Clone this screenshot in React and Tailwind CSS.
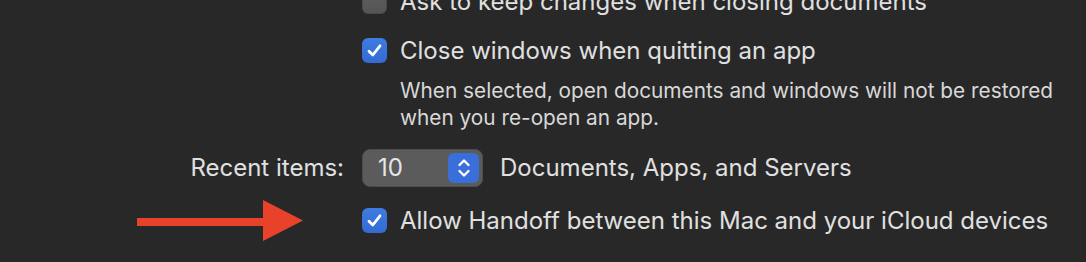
import React from 'react';

function Checkbox({ checked }) {
  if (!checked) {
    return (
      <div className="w-[25px] h-[25px] shrink-0 rounded-[6px] bg-gradient-to-b from-[#5e5e5e] to-[#555555] border border-[#4a4a4a]" />
    );
  }
  return (
    <div className="w-[25px] h-[25px] shrink-0 rounded-[6px] bg-gradient-to-b from-[#3f7be0] to-[#336bd3] flex items-center justify-center">
      <svg width="17" height="17" viewBox="0 0 17 17" fill="none">
        <path d="M3 9.2 L6.8 13 L14 3.8" stroke="white" strokeWidth="2.8" strokeLinecap="round" strokeLinejoin="round" />
      </svg>
    </div>
  );
}

function Stepper({ value }) {
  return (
    <div className="w-[121px] h-[38px] rounded-[8px] bg-[#5b5b5b] border border-[#4d4d4d] flex items-center justify-between pl-[15px] pr-[3px]">
      <span className="text-[24px] text-[#e6e6e6] leading-none">{value}</span>
      <div className="w-[31px] h-[30px] rounded-[6px] bg-[#3a6ed8] flex items-center justify-center">
        <svg width="14" height="22" viewBox="0 0 14 22" fill="none">
          <path d="M2.5 8 L7 3.5 L11.5 8" stroke="white" strokeWidth="2.4" strokeLinecap="round" strokeLinejoin="round" />
          <path d="M2.5 14 L7 18.5 L11.5 14" stroke="white" strokeWidth="2.4" strokeLinecap="round" strokeLinejoin="round" />
        </svg>
      </div>
    </div>
  );
}

function Arrow() {
  return (
    <svg width="166" height="41" viewBox="0 0 166 41">
      <rect x="0" y="18" width="128" height="8" fill="#e8432a" />
      <polygon points="126,0 166,20.5 126,41" fill="#e8432a" />
    </svg>
  );
}

export default function App() {
  return (
    <div className="w-[1086px] h-[262px] overflow-hidden bg-[#282828] text-[#e0e0e0] font-['Inter','Noto_Sans',sans-serif]">
      {/* Ask to keep changes (scrolled, clipped at top) */}
      <div className="mt-[-11px] h-[25px] pl-[362px] flex items-center gap-[13px]">
        <Checkbox checked={false} />
        <span className="text-[24px] leading-none">Ask to keep changes when closing documents</span>
      </div>

      {/* Close windows */}
      <div className="mt-[24px] h-[25px] pl-[362px] flex items-center gap-[13px]">
        <Checkbox checked />
        <span className="text-[24px] leading-none">Close windows when quitting an app</span>
      </div>

      <p className="mt-[14px] pl-[400px] pr-[20px] text-[20.8px] leading-[27px] text-[#d8d8d8]">
        When selected, open documents and windows will not be restored
        <br />
        when you re-open an app.
      </p>

      {/* Recent items */}
      <div className="mt-[18px] h-[38px] flex items-center">
        <div className="w-[345px] text-right text-[24px] leading-none pr-[1px]">Recent items:</div>
        <div className="ml-[17px]">
          <Stepper value="10" />
        </div>
        <span className="ml-[17px] text-[24px] leading-none">Documents, Apps, and Servers</span>
      </div>

      {/* Handoff */}
      <div className="mt-[13px] h-[41px] flex items-center">
        <div className="w-[362px] pl-[137px]">
          <Arrow />
        </div>
        <div className="flex items-center gap-[13px]">
          <Checkbox checked />
          <span className="text-[24px] leading-none">Allow Handoff between this Mac and your iCloud devices</span>
        </div>
      </div>
    </div>
  );
}
